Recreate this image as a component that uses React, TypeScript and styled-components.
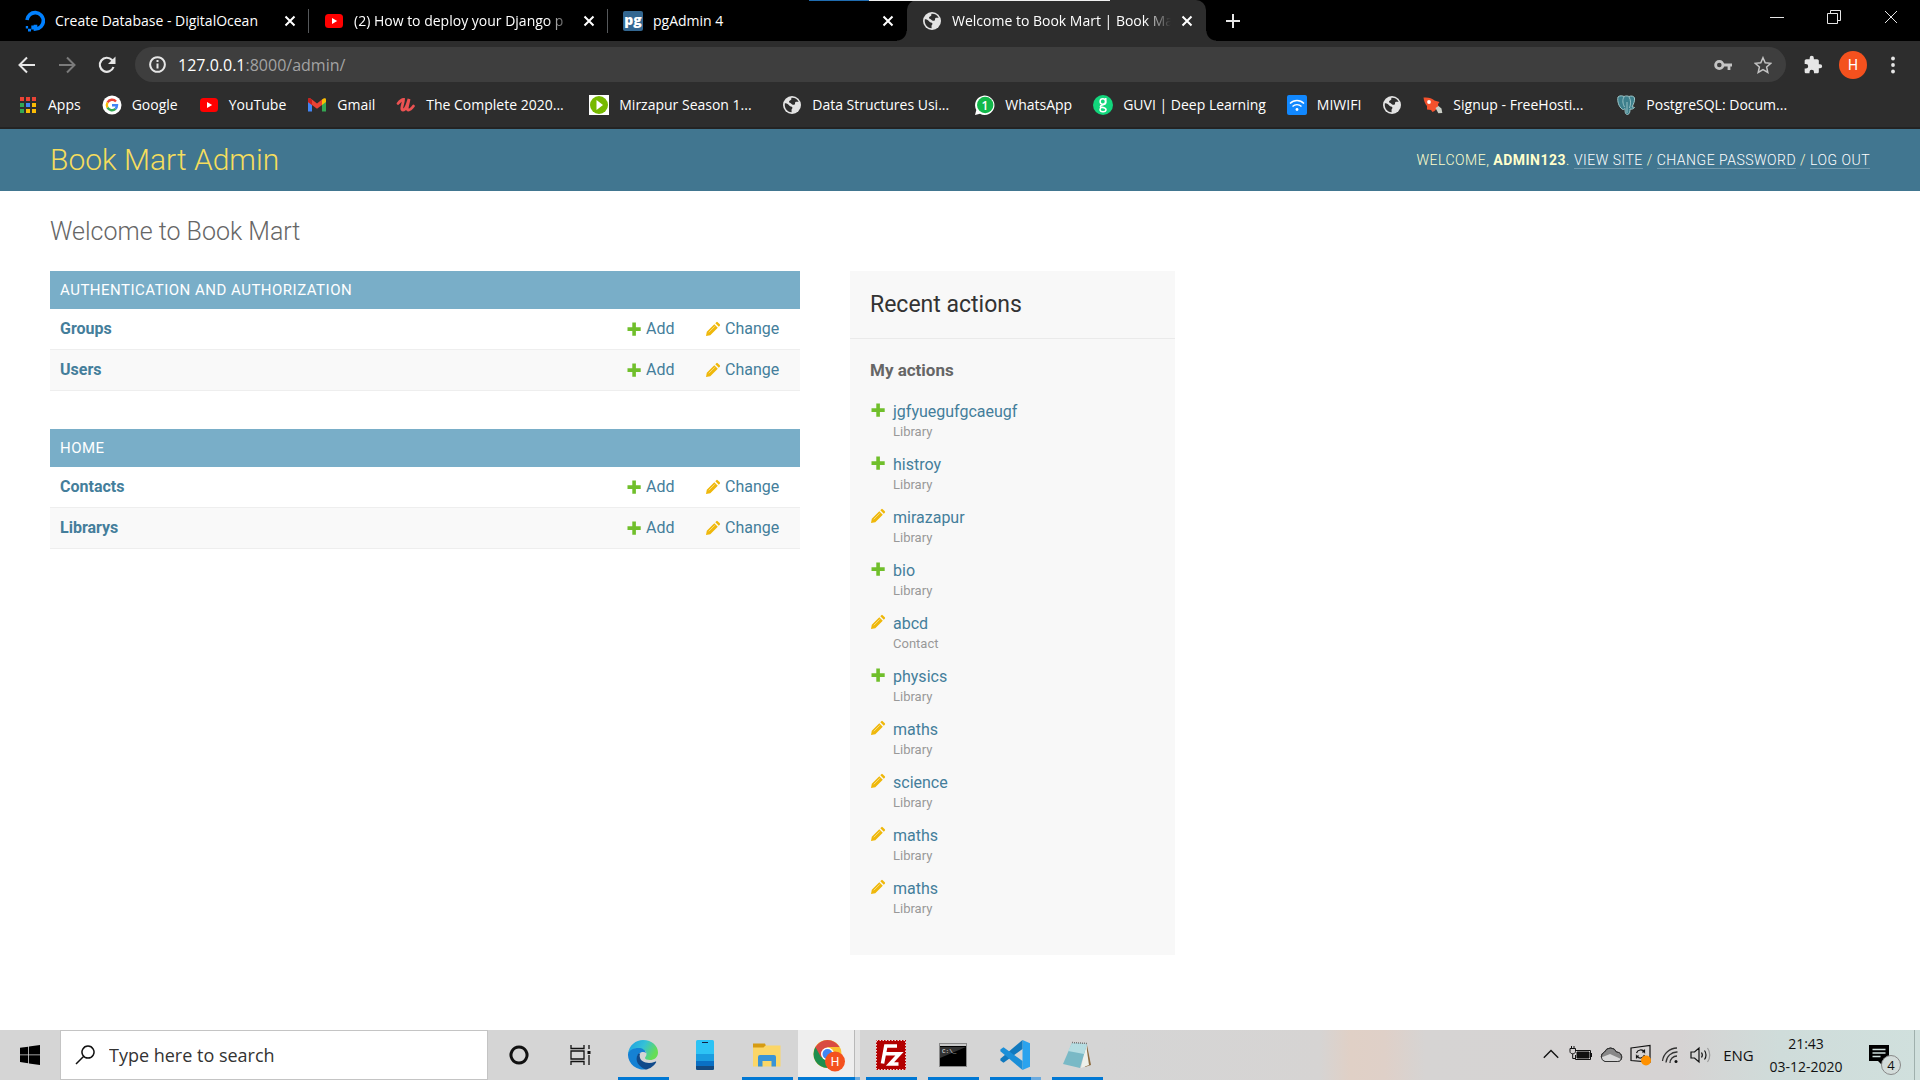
import React from "react";
import styled, { createGlobalStyle, css } from "styled-components";

const ui = `"Open Sans", "Noto Sans", sans-serif`;

const GlobalStyle = createGlobalStyle`
  *, *::before, *::after { box-sizing: border-box; }
  body { margin: 0; background: #fff; }
  button { border: 0; padding: 0; background: none; color: inherit; font: inherit; cursor: pointer; }
  a { color: inherit; text-decoration: none; }
  svg { display: block; flex: none; }
  h1, h2, h3, p, ul { margin: 0; padding: 0; }
  ul { list-style: none; }
`;

const Screen = styled.div`
  display: flex;
  flex-direction: column;
  min-height: 100vh;
`;

/* ---------- Browser window ---------- */

const Chrome = styled.header`
  background: #2d2d2d;
  color: #fff;
  font: 14px/20px ${ui};
  border-bottom: 2px solid #232323;
`;

const TabStrip = styled.div`
  position: relative;
  display: flex;
  height: 41px;
  padding-left: 10px;
  background: #000;
`;

const LoadingStrip = styled.div`
  position: absolute;
  top: 0;
  left: 809px;
  width: 301px;
  height: 1px;
  background: linear-gradient(90deg, #1f6cb0 0 60px, #f0f0f0 60px);
`;

const Tab = styled.div<{ $active?: boolean; $divider?: boolean }>`
  position: relative;
  display: flex;
  align-items: center;
  gap: 10px;
  width: 299px;
  padding: 0 13px 0 15px;
  ${(p) =>
    p.$active &&
    css`
      background: #2d2d2d;
      border-radius: 10px 10px 0 0;
      &::before, &::after {
        content: "";
        position: absolute;
        bottom: 0;
        width: 10px;
        height: 10px;
      }
      &::before { right: 100%; background: radial-gradient(circle at 0 0, #000 9px, #2d2d2d 10px); }
      &::after { left: 100%; background: radial-gradient(circle at 100% 0, #000 9px, #2d2d2d 10px); }
    `}
  ${(p) =>
    p.$divider &&
    css`
      &::after {
        content: "";
        position: absolute;
        right: 0;
        top: 9px;
        width: 1px;
        height: 24px;
        background: #55585b;
      }
    `}
`;

const TabTitle = styled.button<{ $fade?: boolean }>`
  flex: 1;
  min-width: 0;
  overflow: hidden;
  white-space: nowrap;
  text-align: left;
  ${(p) => p.$fade && css`mask-image: linear-gradient(90deg, #000 88%, transparent);`}
`;

const IconButton = styled.button<{ $w?: number; $dim?: boolean }>`
  display: grid;
  place-items: center;
  flex: none;
  width: ${(p) => p.$w ?? 40}px;
  height: 34px;
  color: ${(p) => (p.$dim ? "#7b7b7b" : "#e6e6e6")};
`;

const NewTab = styled(IconButton)`
  margin: 4px 0 0 7px;
`;

const WindowButtons = styled.div`
  display: flex;
  margin-left: auto;
  padding-right: 1px;
`;

const Toolbar = styled.div`
  display: flex;
  align-items: center;
  height: 47px;
  padding: 0 7px;
`;

const AddressBox = styled.form`
  display: flex;
  flex: 1;
  align-items: center;
  height: 35px;
  margin: 0 7px 0 8px;
  padding: 0 3px 0 14px;
  border-radius: 18px;
  background: #3e3e3e;
  color: #e6e6e6;
`;

const Address = styled.div`
  flex: 1;
  padding-left: 12px;
  font-size: 16px;
  color: #a3a3a3;
  strong { font-weight: 400; color: #fff; }
`;

const Avatar = styled.span`
  display: grid;
  place-items: center;
  width: 28px;
  height: 28px;
  border-radius: 50%;
  background: #f4511e;
  color: #fff;
  font: 14px/20px Roboto, sans-serif;
`;

const Bookmarks = styled.nav`
  display: flex;
  align-items: center;
  gap: 21px;
  height: 39px;
  padding: 0 18px 5px;
`;

const Bookmark = styled.a<{ $full?: boolean }>`
  display: flex;
  align-items: center;
  gap: 10px;
  flex: none;
  width: ${(p) => (p.$full ? "172px" : "auto")};
  white-space: nowrap;
`;

/* ---------- Admin site ---------- */

const Site = styled.div`
  flex: 1;
  font: 16px/20px Roboto, sans-serif;
  color: #333;
`;

const SiteHeader = styled.div`
  display: flex;
  align-items: center;
  justify-content: space-between;
  min-height: 62px;
  padding: 0 50px;
  background: #417690;
  color: #ffc;
`;

const Brand = styled.h1`
  font-size: 30px;
  line-height: 38px;
  font-weight: 300;
  color: #f5dd5d;
`;

const UserTools = styled.div`
  font-size: 14px;
  font-weight: 300;
  letter-spacing: 0.5px;
  text-transform: uppercase;
  strong { font-weight: 700; }
  a { color: #fff; border-bottom: 1px solid rgba(255, 255, 255, 0.25); }
`;

const Content = styled.main`
  padding: 25px 50px 75px;
`;

const Title = styled.h1`
  margin-bottom: 23px;
  font-size: 25px;
  line-height: 32px;
  font-weight: 300;
  color: #666;
`;

const Columns = styled.div`
  display: grid;
  grid-template-columns: minmax(0, 750px) 325px;
  align-items: start;
  gap: 50px;
`;

const Modules = styled.div`
  display: grid;
  gap: 38px;
`;

const Module = styled.table`
  width: 100%;
  border-spacing: 0;
  caption {
    padding: 9px 10px;
    background: #79aec8;
    color: #fff;
    font-size: 15px;
    letter-spacing: 0.5px;
    text-align: left;
    text-transform: uppercase;
  }
  tr:nth-child(even) { background: #f9f9f9; }
  th, td { height: 41px; border-bottom: 1px solid #eee; }
  th { padding: 0 10px; text-align: left; color: #447e9b; font-weight: 700; }
  td { padding: 0 20px 0 10px; }
  td:nth-child(2) { width: 79px; }
  td:nth-child(3) { width: 105px; }
`;

const IconLink = styled.a`
  display: flex;
  align-items: center;
  gap: 4px;
  color: #447e9b;
`;

const Recent = styled.aside`
  padding-bottom: 24px;
  background: #f8f8f8;
  color: #666;
  h2 {
    padding: 20px 20px 19px;
    border-bottom: 1px solid #eaeaea;
    font-size: 23px;
    line-height: 28px;
    font-weight: 400;
    color: #333;
  }
  h3 {
    padding: 20px 20px 0;
    font-size: 17px;
    line-height: 22px;
    font-weight: 700;
  }
`;

const ActionList = styled.ul`
  padding: 20px 20px 0;
`;

const Action = styled.li`
  display: grid;
  grid-template-columns: 16px 1fr;
  column-gap: 7px;
  padding-top: 1px;
  padding-bottom: 12px;
  a { color: #447e9b; }
  p { grid-column: 2; font-size: 13px; color: #999; }
`;

/* ---------- Taskbar ---------- */

const Taskbar = styled.footer`
  display: flex;
  height: 50px;
  background: linear-gradient(90deg, #d5d5d5 0 1100px, #d6d4d3 1320px, #e0d0c6 1350px, #dfd0c8 1385px, #d6d4d3 1425px, #d6d3d3 1680px, #cfdcda 1780px, #d0e0dd 1920px);
  color: #111;
  font: 16px/20px ${ui};
`;

const TaskButton = styled.button<{ $w?: number; $mark?: "one" | "many" | "active" }>`
  display: grid;
  place-items: center;
  flex: none;
  width: ${(p) => p.$w ?? 62}px;
  height: 50px;
  background: linear-gradient(90deg, #0078d4 0 41px, ${(p) => (p.$mark === "many" ? "#6cabdf" : "#0078d4")} 41px) center bottom / ${(p) => (p.$mark ? 51 : 0)}px 3px no-repeat;
  ${(p) =>
    p.$mark === "active" &&
    css`
      background:
        linear-gradient(90deg, #0078d4 0 57px, #6cabdf 57px) bottom / 100% 3px no-repeat,
        linear-gradient(90deg, #eeeeee 0 56px, #b8b8b8 56px 57px, #e4e4e4 57px);
    `}
`;

const Search = styled.label`
  display: flex;
  align-items: center;
  gap: 14px;
  width: 428px;
  padding-left: 14px;
  border: 1px solid #c4c4c4;
  background: #fff;
  input {
    flex: 1;
    min-width: 0;
    border: 0;
    outline: 0;
    padding: 0;
    font: 18px/24px ${ui};
    color: #333;
  }
  input::placeholder { color: #333; opacity: 1; }
`;

const Tray = styled.div`
  display: flex;
  align-items: center;
  margin-left: auto;
`;

const Lang = styled.button`
  width: 45px;
  font-size: 15px;
`;

const Clock = styled.button`
  width: 90px;
  font-size: 14px;
  line-height: 23px;
  text-align: center;
`;

const Notices = styled.button`
  position: relative;
  width: 64px;
  height: 50px;
  padding-left: 18px;
  border-right: 1px solid #9fb0ad;
  margin-right: 5px;
`;

const Count = styled.span`
  position: absolute;
  right: 13px;
  bottom: 5px;
  width: 20px;
  height: 20px;
  border: 1px solid #888;
  border-radius: 50%;
  background: #d3dcda;
  font-size: 13px;
  line-height: 18px;
  text-align: center;
`;

/* ---------- Drawings ---------- */

const Line = ({ d, s = 20, w = 2, vb = 20 }: { d: string; s?: number; w?: number; vb?: number }) => (
  <svg width={s} height={s} viewBox={`0 0 ${vb} ${vb}`} fill="none" stroke="currentColor" strokeWidth={w} aria-hidden>
    <path d={d} />
  </svg>
);

const Close = () => <Line d="M1.5 1.5l9 9m0-9l-9 9" s={12} vb={12} />;

const Ocean = () => (
  <svg width="20" height="22" viewBox="0 0 20 22">
    <path d="M2 10a8.2 8.2 0 1 1 8.500 9v-4.300" fill="none" stroke="#0080ff" strokeWidth="3.600" />
    <path d="M6.300 15.500h4V19.500h-4zM3 18.800h3V21.500H3zM.8 16h2.300v2.500H.8z" fill="#0080ff" />
  </svg>
);

const YouTube = () => (
  <svg width="20" height="20" viewBox="0 0 20 20">
    <rect x="1" y="3" width="18" height="14" rx="3.500" fill="#f00" />
    <path d="M8 7l5.200 3L8 13z" fill="#fff" />
  </svg>
);

const Pg = () => (
  <svg width="20" height="20" viewBox="0 0 20 20">
    <rect width="20" height="20" rx="2" fill="#336791" />
    <text x="10" y="14" textAnchor="middle" fill="#fff" fontFamily="Open Sans" fontWeight="800" fontSize="14">pg</text>
  </svg>
);

const Globe = () => (
  <svg width="20" height="20" viewBox="0 0 20 20">
    <circle cx="10" cy="10" r="9" fill="#e3e3e3" />
    <path d="M2.800 8.500C4.500 8 6 9 7.500 10.800c.6.800 2.300.6 2.800 1.400.6 1-.8 1.800-.8 2.800 0 .8.300 1.500.1 2.200C5 17 2.300 13 2.800 8.500zM9.500 2.800c3.200-.3 6 1.400 7.200 4-1.500.2-2.600-.3-3.400.4-.7.700.2 1.700-.7 2.300-1.200.8-2.600-.1-3.600-1-.7-.7-2-.6-2-1.700 0-1.300 1.900-1.200 2.300-2.200.200-.6-.2-1.200.2-1.800z" fill="#2d2d2d" />
  </svg>
);

const Apps = () => {
  const colors = ["#ea4335", "#ea4335", "#ea4335", "#34a853", "#4285f4", "#fbbc05", "#34a853", "#fbbc05", "#fbbc05"];
  return (
    <svg width="20" height="20" viewBox="0 0 20 20">
      {colors.map((c, i) => (
        <rect key={i} x={2 + (i % 3) * 6} y={2 + Math.floor(i / 3) * 6} width="4" height="4" fill={c} />
      ))}
    </svg>
  );
};

const Google = () => (
  <svg width="20" height="20" viewBox="0 0 20 20">
    <circle cx="10" cy="10" r="9.500" fill="#fff" />
    <g fill="none" strokeWidth="2.400">
      <path d="M14 6.500A5.200 5.200 0 0 0 5.500 7.500" stroke="#ea4335" />
      <path d="M5.500 7.500a5.200 5.200 0 0 0 0 5.200" stroke="#fbbc05" />
      <path d="M5.500 12.700a5.200 5.200 0 0 0 8 1.200" stroke="#34a853" />
      <path d="M13.500 13.900A5.200 5.200 0 0 0 15 10.300h-5" stroke="#4285f4" />
    </g>
  </svg>
);

const Gmail = () => (
  <svg width="20" height="20" viewBox="0 0 20 20">
    <path d="M1 6v10.500h4V9z" fill="#4285f4" />
    <path d="M19 6v10.500h-4V9z" fill="#34a853" />
    <path d="M15 4.500L17 3.300a1.400 1.400 0 0 1 2 1.200V7l-4 3z" fill="#fbbc04" />
    <path d="M1 7V4.500a1.400 1.400 0 0 1 2-1.200L5 4.500l5 4 5-4V10l-5 3.700L5 10z" fill="#ea4335" />
    <path d="M1 7V4.500a1.400 1.400 0 0 1 2-1.200L5 4.500V10z" fill="#c5221f" />
  </svg>
);

const Udemy = () => (
  <svg width="20" height="20" viewBox="0 0 20 20">
    <path d="M2 8.500c2-2.500 4-4 5.500-4C7.500 8 4 15 7 15s4.500-6 6-11c-.5 4.500-3.500 11-.5 11 2 0 3.500-2 5-4" fill="none" stroke="#ec5252" strokeWidth="2.800" strokeLinecap="round" />
  </svg>
);

const Play = () => (
  <svg width="20" height="20" viewBox="0 0 20 20">
    <path d="M0 0h20v20H0z" fill="#fff" />
    <circle cx="10" cy="10" r="9" fill="#76b900" />
    <path d="M7.500 5l6.500 5-6.500 5z" fill="#fff" />
  </svg>
);

const WhatsApp = () => (
  <svg width="20" height="20" viewBox="0 0 20 20">
    <path d="M0 20l1.300-5A9.700 9.700 0 1 1 5 18.700z" fill="#fff" />
    <circle cx="10.200" cy="10" r="8.200" fill="#12b84a" />
    <text x="10" y="14.500" textAnchor="middle" fill="#fff" fontFamily="Open Sans" fontWeight="600" fontSize="12">1</text>
  </svg>
);

const Guvi = () => (
  <svg width="20" height="20" viewBox="0 0 20 20">
    <circle cx="10" cy="10" r="10" fill="#12d67c" />
    <g fill="none" stroke="#fff" strokeWidth="1.500">
      <circle cx="9.800" cy="6.500" r="2.700" />
      <path d="M12.800 3v5c0 2-5.500 1.500-5.500 3.500 0 1 5.700.5 5.700 3 0 3-6 3-6 0 0-1.500 1-2 2-2.200" />
    </g>
  </svg>
);

const MiWifi = () => (
  <svg width="20" height="20" viewBox="0 0 20 20">
    <rect width="20" height="20" rx="2" fill="#1188ff" />
    <path d="M3 8.500c4-4 10-4 14 0M5.500 11.500c2.500-2.500 6.500-2.500 9 0" fill="none" stroke="#fff" strokeWidth="1.400" />
    <circle cx="10" cy="14.500" r="1.400" fill="#fff" />
  </svg>
);

const Rocket = () => (
  <svg width="20" height="20" viewBox="0 0 20 20">
    <path d="M.5 2.500C5 2 9 3 11.500 5.500l5 1.500-1.500 2 .5 3-4 4-2 1-1.500-2-4-.5L4 11C2 9 1 6 .5 2.500z" fill="#f4512c" />
    <path d="M12.500 13l3-2 3 2.500.8 4.500-4 .3z" fill="#c9cdc5" />
    <circle cx="6" cy="7" r="1.900" fill="#fff" />
  </svg>
);

const Elephant = () => (
  <svg width="20" height="20" viewBox="0 0 20 20">
    <path d="M2 2c2-2 5-1 6-.5C10 .5 12 1 13 1.500c2-1 5-.5 5.500 1.500.5 3-1 6-2.500 9 1 0 2 0 2.500.5-1 1.500-3 2-4.500 1.500 0 2 0 5-2.500 5.500-2.500 0-2.500-3-2.500-6-1 1-2 1.500-3 .5C3 12 1 6 2 2z" fill="#3d7f8c" stroke="#9fc6c8" strokeWidth="1" />
    <path d="M8 2C6 5 7 9 8.500 12M13 2c2 3 2 7 .5 11M11 7v11" fill="none" stroke="#9fc6c8" strokeWidth=".9" />
  </svg>
);

const Plus = () => (
  <svg width="16" height="16" viewBox="0 0 16 16">
    <path d="M6.300 1.500h3.600v4.800h4.800v3.600H9.900v4.800H6.300V9.900H1.500V6.300h4.800z" fill="#70bf2b" />
  </svg>
);

const Pencil = () => (
  <svg width="16" height="16" viewBox="0 0 16 16">
    <path d="M1 15l.8-4.300L9.300 3.200l3.500 3.500-7.500 7.500zM10.300 2.200l1-1a1 1 0 0 1 1.400 0L14.800 3.300a1 1 0 0 1 0 1.400l-1 1z" fill="#efb80b" />
    <path d="M3.800 11.300l6-6" stroke="#f8dd85" strokeWidth="1" />
  </svg>
);

const Windows = () => (
  <svg width="20" height="20" viewBox="0 0 20 20">
    <path d="M0 2.800L8.200 1.700v7.800H0zM9 1.600L20 0v9.500H9zM0 10.300h8.200v7.900L0 17.100zM9 10.300h11V20L9 18.400z" />
  </svg>
);

const TaskView = () => (
  <svg width="22" height="20" viewBox="0 0 22 20" fill="none" stroke="#111" strokeWidth="1.300">
    <path d="M1 0v3.500h13V0M1 20v-3.500h13V20M1 6h13v8H1zM19 0v4M19 10v10" />
    <path d="M17.500 6h3v3h-3z" fill="#111" stroke="none" />
  </svg>
);

const Edge = () => (
  <svg width="30" height="30" viewBox="0 0 30 30">
    <defs>
      <linearGradient id="edgeTop" x2="1" y2=".4">
        <stop offset="0" stopColor="#1b9de2" />
        <stop offset=".55" stopColor="#35c1d8" />
        <stop offset="1" stopColor="#66dd55" />
      </linearGradient>
    </defs>
    <path d="M0 14C1 5 8 0 15 0c9 0 15 6 15 12.500 0 5-4 7.500-8 7.500-3 0-5-1-5-2s1.500-1.500 1.500-4c0-3-3-5-7-5-5 0-10 2-11.500 5z" fill="url(#edgeTop)" />
    <path d="M0 14c1-4 6-6 10.500-6 4 0 7 2 7.500 5-2-2-8-1-8.500 4-.5 6 4.500 10.500 9.500 12A15 15 0 0 1 0 14z" fill="#1581d4" />
    <path d="M10 14c-4 7 1 13 8 15.500 4-.7 8-3.500 10-7 .5-1 0-1.300-1-.8-7 3-14.500.3-15.200-4.700-.2-1.500 0-2.500.5-3.500-1 0-1.800 0-2.300.5z" fill="#114a8b" />
  </svg>
);

const Phone = () => (
  <svg width="18" height="30" viewBox="0 0 18 30">
    <rect width="18" height="30" rx="1.500" fill="#2dc3f5" />
    <path d="M0 14h18v7H0z" fill="#1a9de0" />
    <path d="M0 21h18v5H0z" fill="#0a70c4" />
    <path d="M0 26h18v2.500a1.500 1.500 0 0 1-1.500 1.500h-15A1.500 1.500 0 0 1 0 28.500z" fill="#144a80" />
    <path d="M6 2.500h6" stroke="#124" strokeWidth="1" />
  </svg>
);

const Folder = () => (
  <svg width="30" height="26" viewBox="0 0 30 26">
    <path d="M1 1.500h12l1 2.500-2 2H1z" fill="#d69b12" />
    <path d="M1 5.500h10.500l2-2h15v21H1z" fill="#fbd667" />
    <path d="M6 24.500V15a2 2 0 0 1 2-2h14a2 2 0 0 1 2 2v9.500h-4.500V19h-9v5.500z" fill="#3a94d6" />
  </svg>
);

const ChromeLogo = () => (
  <svg width="32" height="34" viewBox="0 0 32 34">
    <circle cx="14.500" cy="16" r="14" fill="#fbc02d" />
    <path d="M14.500 16L2.400 9A14 14 0 0 0 14.500 30l6-10.500z" fill="#1e8e4e" />
    <path d="M14.500 16l-6.300 3.500L2.400 9a14 14 0 0 1 24.200 0H14.500z" fill="#d94b41" />
    <circle cx="14.500" cy="16" r="6.500" fill="#fff" />
    <circle cx="14.500" cy="16" r="5" fill="#4285f4" />
    <circle cx="22" cy="23.500" r="10" fill="#f4511e" />
    <text x="22" y="28" textAnchor="middle" fill="#fff" fontFamily="Roboto" fontSize="12">H</text>
  </svg>
);

const FileZilla = () => (
  <svg width="30" height="30" viewBox="0 0 30 30">
    <rect width="30" height="30" fill="#b30000" />
    <rect x=".5" y=".5" width="29" height="29" fill="none" stroke="#f3d5d5" strokeDasharray="1.500 1.500" />
    <path d="M6.500 23.500L9.800 6H21M8.500 13.800h8M13 13.800h10.500L14 24h8.500" fill="none" stroke="#fff" strokeWidth="3.600" />
  </svg>
);

const Terminal = () => (
  <svg width="28" height="24" viewBox="0 0 28 24">
    <rect x=".5" y=".5" width="27" height="23" fill="#000" stroke="#888" />
    <path d="M1 1h26v2H1z" fill="#c9c9c9" />
    <path d="M1 4h26L1 15z" fill="#333" />
    <text x="3" y="10" fill="#eee" fontFamily="Liberation Mono" fontSize="6">C:\_</text>
  </svg>
);

const VSCode = () => (
  <svg width="30" height="30" viewBox="0 0 30 30">
    <path d="M22.500 0L30 3.200v23.600L22.500 30z" fill="#2aa3ee" />
    <path d="M22.500 0v9L3.500 22.700.4 20.500v-1.800z" fill="#1179be" />
    <path d="M22.500 30v-9L3.500 7.300.4 9.500v1.800z" fill="#1b8fd8" />
  </svg>
);

const Notepad = () => (
  <svg width="30" height="28" viewBox="0 0 30 28">
    <path d="M25 4l4 20-6 2z" fill="#8d6b3f" />
    <path d="M24 3l3 21-8 3z" fill="#eef0ea" />
    <path d="M10 2l15 1-7 24L1 23z" fill="#79b9c6" />
    <path d="M10 2l15 1-3 10L6 10z" fill="#b5dde2" />
    <path d="M10 1.500l15 1" stroke="#777" strokeWidth="1.500" strokeDasharray="1 1" />
  </svg>
);

const Battery = () => (
  <svg width="24" height="18" viewBox="0 0 24 18" fill="none" stroke="#111">
    <path d="M6.500 4.500h15v9h-15V9M22.500 7v4M1 2.500h5.500v3c0 3-5.500 3-5.500 0zM2.500 0v2.500M5 0v2.500M3.700 8v4.500h2.500" />
    <path d="M8 6h12v6H8z" fill="#111" />
  </svg>
);

const Cloud = () => (
  <svg width="24" height="18" viewBox="0 0 24 18" stroke="#333">
    <path d="M6 15.500a5 5 0 0 1-.5-9.500A6.500 6.500 0 0 1 17.500 6c7 .5 6.500 9.500 1 9.500z" fill="#888" />
    <path d="M5 15.500c-3 0-4-2-4-3.500L11 8l11 5c-1 2-2 2.500-3.500 2.500z" fill="#d8d8d8" stroke="none" />
    <path d="M6 15.500a5 5 0 0 1-.5-9.500A6.500 6.500 0 0 1 17.500 6c7 .5 6.500 9.500 1 9.500z" fill="none" />
  </svg>
);

const Update = () => (
  <svg width="22" height="22" viewBox="0 0 22 22" fill="none" stroke="#111" strokeWidth="1.200">
    <path d="M1 4l19-2.500V18L1 16.500z" />
    <path d="M6.500 9a4.500 4.500 0 0 1 8-1V5.500M14.500 8H12M14.500 11a4.500 4.500 0 0 1-8 1v2.500M6.500 12H9" />
    <circle cx="16" cy="16.500" r="5" fill="#ff9100" stroke="none" />
  </svg>
);

const Wifi = () => (
  <svg width="20" height="18" viewBox="0 0 20 18" fill="none" stroke="#333" strokeWidth="1.300">
    <path d="M1.500 15A15 15 0 0 1 16 2M5 16.500A11 11 0 0 1 16.500 6M9 17a7 7 0 0 1 7-7" />
    <circle cx="15" cy="15.500" r="1.500" fill="#111" stroke="none" />
  </svg>
);

const Speaker = () => (
  <svg width="22" height="18" viewBox="0 0 22 18" fill="none" stroke="#111" strokeWidth="1.200">
    <path d="M1 6h3.500L9 2v14l-4.500-4H1zM11.500 6.500c1 1.500 1 3.500 0 5M14.500 4.500c2 2.500 2 6.500 0 9" />
    <path d="M17.500 2c3 4 3 10 0 14" stroke="#999" />
  </svg>
);

/* ---------- Data ---------- */

const tabs = [
  { title: "Create Database - DigitalOcean", icon: <Ocean />, divider: true },
  { title: "(2) How to deploy your Django p", icon: <YouTube />, divider: true, fade: true },
  { title: "pgAdmin 4", icon: <Pg /> },
  { title: "Welcome to Book Mart | Book Ma", icon: <Globe />, active: true, fade: true },
];

const bookmarks = [
  { label: "Apps", icon: <Apps /> },
  { label: "Google", icon: <Google /> },
  { label: "YouTube", icon: <YouTube /> },
  { label: "Gmail", icon: <Gmail /> },
  { label: "The Complete 2020...", icon: <Udemy />, full: true },
  { label: "Mirzapur Season 1...", icon: <Play />, full: true },
  { label: "Data Structures Usi...", icon: <Globe />, full: true },
  { label: "WhatsApp", icon: <WhatsApp /> },
  { label: "GUVI | Deep Learning", icon: <Guvi /> },
  { label: "MIWIFI", icon: <MiWifi /> },
  { label: "", icon: <Globe /> },
  { label: "Signup - FreeHosti...", icon: <Rocket />, full: true },
  { label: "PostgreSQL: Docum...", icon: <Elephant />, full: true },
];

const modules = [
  { name: "Authentication and Authorization", models: ["Groups", "Users"] },
  { name: "Home", models: ["Contacts", "Librarys"] },
];

const actions = [
  { kind: "add", name: "jgfyuegufgcaeugf", type: "Library" },
  { kind: "add", name: "histroy", type: "Library" },
  { kind: "change", name: "mirazapur", type: "Library" },
  { kind: "add", name: "bio", type: "Library" },
  { kind: "change", name: "abcd", type: "Contact" },
  { kind: "add", name: "physics", type: "Library" },
  { kind: "change", name: "maths", type: "Library" },
  { kind: "change", name: "science", type: "Library" },
  { kind: "change", name: "maths", type: "Library" },
  { kind: "change", name: "maths", type: "Library" },
];

const apps: { name: string; icon: React.ReactNode; mark?: "one" | "many" | "active" }[] = [
  { name: "Edge", icon: <Edge />, mark: "one" },
  { name: "Your Phone", icon: <Phone /> },
  { name: "File Explorer", icon: <Folder />, mark: "one" },
  { name: "Chrome", icon: <ChromeLogo />, mark: "active" },
  { name: "FileZilla", icon: <FileZilla />, mark: "one" },
  { name: "Command Prompt", icon: <Terminal />, mark: "one" },
  { name: "Visual Studio Code", icon: <VSCode />, mark: "many" },
  { name: "Notepad", icon: <Notepad />, mark: "one" },
];

/* ---------- Page ---------- */

export default function App() {
  return (
    <Screen>
      <GlobalStyle />
      <Chrome>
        <TabStrip>
          {tabs.map((t) => (
            <Tab key={t.title} $active={t.active} $divider={t.divider}>
              {t.icon}
              <TabTitle $fade={t.fade}>{t.title}</TabTitle>
              <button aria-label="Close tab"><Close /></button>
            </Tab>
          ))}
          <NewTab aria-label="New tab"><Line d="M8 1v14M1 8h14" s={16} vb={16} /></NewTab>
          <WindowButtons>
            <IconButton $w={57} aria-label="Minimize"><Line d="M0 7.500h14" s={14} vb={14} w={1} /></IconButton>
            <IconButton $w={57} aria-label="Restore"><Line d="M.5 3.500h10v10H.5zM3.500 3V.5h10v10H11" s={14} vb={14} w={1} /></IconButton>
            <IconButton $w={57} aria-label="Close window"><Line d="M1 1l12 12M13 1L1 13" s={14} vb={14} w={1} /></IconButton>
          </WindowButtons>
          <LoadingStrip />
        </TabStrip>
        <Toolbar>
          <IconButton aria-label="Back"><Line d="M18 10H3M10 2.500L2.500 10l7.500 7.500" /></IconButton>
          <IconButton $dim aria-label="Forward"><Line d="M2 10h15M10 2.500l7.500 7.500-7.500 7.500" /></IconButton>
          <IconButton aria-label="Reload">
            <svg width="20" height="20" viewBox="0 0 20 20">
              <path d="M16.500 12A7 7 0 1 1 15 5l2 2" fill="none" stroke="currentColor" strokeWidth="2.200" />
              <path d="M18.500 1.500v7.500H11z" fill="currentColor" />
            </svg>
          </IconButton>
          <AddressBox onSubmit={(e) => e.preventDefault()}>
            <Line d="M8.500 1.200a7.300 7.300 0 1 0 .01 0zM8.500 4v2M8.500 7.500v5" s={17} vb={17} />
            <Address><strong>127.0.0.1</strong>:8000/admin/</Address>
            <IconButton type="button" aria-label="Passwords">
              <svg width="18" height="12" viewBox="0 0 18 12" fill="none" stroke="#c4c4c4" strokeWidth="2.800">
                <circle cx="5.300" cy="6" r="3.700" />
                <path d="M9 6h9M15 6v5" />
              </svg>
            </IconButton>
            <IconButton type="button" aria-label="Bookmark">
              <svg width="18" height="18" viewBox="0 0 18 18" fill="none" stroke="#c4c4c4" strokeWidth="1.500">
                <path d="M9 1.700l2.200 5.100 5.600.5-4.200 3.700 1.200 5.400L9 13.600l-4.800 2.800L5.400 11 1.200 7.300l5.600-.5z" />
              </svg>
            </IconButton>
          </AddressBox>
          <IconButton aria-label="Extensions">
            <svg width="20" height="20" viewBox="0 0 24 24" fill="#e6e6e6">
              <path d="M20.500 11H19V7c0-1.100-.9-2-2-2h-4V3.500a2.500 2.500 0 0 0-5 0V5H4c-1.100 0-2 .9-2 2v3.800h1.500a2.700 2.700 0 0 1 0 5.400H2V20c0 1.100.9 2 2 2h3.800v-1.500a2.700 2.700 0 0 1 5.400 0V22H17c1.100 0 2-.9 2-2v-4h1.500a2.500 2.500 0 0 0 0-5z" />
            </svg>
          </IconButton>
          <IconButton aria-label="Profile"><Avatar>H</Avatar></IconButton>
          <IconButton aria-label="Menu">
            <svg width="4" height="18" viewBox="0 0 4 18" fill="#e6e6e6">
              <circle cx="2" cy="2.500" r="1.900" /><circle cx="2" cy="9" r="1.900" /><circle cx="2" cy="15.500" r="1.900" />
            </svg>
          </IconButton>
        </Toolbar>
        <Bookmarks>
          {bookmarks.map((b, i) => (
            <Bookmark key={i} href="#" $full={b.full} aria-label={b.label || "Bookmark"}>{b.icon}{b.label}</Bookmark>
          ))}
        </Bookmarks>
      </Chrome>

      <Site>
        <SiteHeader>
          <Brand>Book Mart Admin</Brand>
          <UserTools>
            Welcome, <strong>admin123</strong>. <a href="#">View site</a> / <a href="#">Change password</a> / <a href="#">Log out</a>
          </UserTools>
        </SiteHeader>
        <Content>
          <Title>Welcome to Book Mart</Title>
          <Columns>
            <Modules>
              {modules.map((m) => (
                <Module key={m.name}>
                  <caption>{m.name}</caption>
                  <tbody>
                    {m.models.map((name) => (
                      <tr key={name}>
                        <th scope="row"><a href="#">{name}</a></th>
                        <td><IconLink href="#"><Plus />Add</IconLink></td>
                        <td><IconLink href="#"><Pencil />Change</IconLink></td>
                      </tr>
                    ))}
                  </tbody>
                </Module>
              ))}
            </Modules>
            <Recent>
              <h2>Recent actions</h2>
              <h3>My actions</h3>
              <ActionList>
                {actions.map((a, i) => (
                  <Action key={i}>
                    {a.kind === "add" ? <Plus /> : <Pencil />}
                    <a href="#">{a.name}</a>
                    <p>{a.type}</p>
                  </Action>
                ))}
              </ActionList>
            </Recent>
          </Columns>
        </Content>
      </Site>

      <Taskbar>
        <TaskButton $w={60} aria-label="Start"><Windows /></TaskButton>
        <Search>
          <Line d="M13 1a6 6 0 1 1-.01 0zM8.500 11.500L1 19" w={1.500} />
          <input type="text" placeholder="Type here to search" aria-label="Search" />
        </Search>
        <TaskButton aria-label="Cortana"><Line d="M10 2a8 8 0 1 1-.01 0z" w={3} /></TaskButton>
        <TaskButton aria-label="Task view"><TaskView /></TaskButton>
        {apps.map((a) => (
          <TaskButton key={a.name} $mark={a.mark} aria-label={a.name}>{a.icon}</TaskButton>
        ))}
        <Tray>
          <TaskButton $w={30} aria-label="Hidden icons"><Line d="M2 13l8-8 8 8" w={1.500} s={18} /></TaskButton>
          <TaskButton $w={30} aria-label="Battery"><Battery /></TaskButton>
          <TaskButton $w={30} aria-label="OneDrive"><Cloud /></TaskButton>
          <TaskButton $w={30} aria-label="Update"><Update /></TaskButton>
          <TaskButton $w={30} aria-label="Network"><Wifi /></TaskButton>
          <TaskButton $w={30} aria-label="Volume"><Speaker /></TaskButton>
          <Lang>ENG</Lang>
          <Clock>21:43<br />03-12-2020</Clock>
          <Notices aria-label="4 notifications">
            <svg width="20" height="20" viewBox="0 0 20 20">
              <path d="M0 0h20v16h-7v4l-4-4H0z" />
              <path d="M3.500 4.500h13M3.500 8h13M3.500 11.500h8" stroke="#d0e0dd" strokeWidth="1.300" />
            </svg>
            <Count>4</Count>
          </Notices>
        </Tray>
      </Taskbar>
    </Screen>
  );
}
